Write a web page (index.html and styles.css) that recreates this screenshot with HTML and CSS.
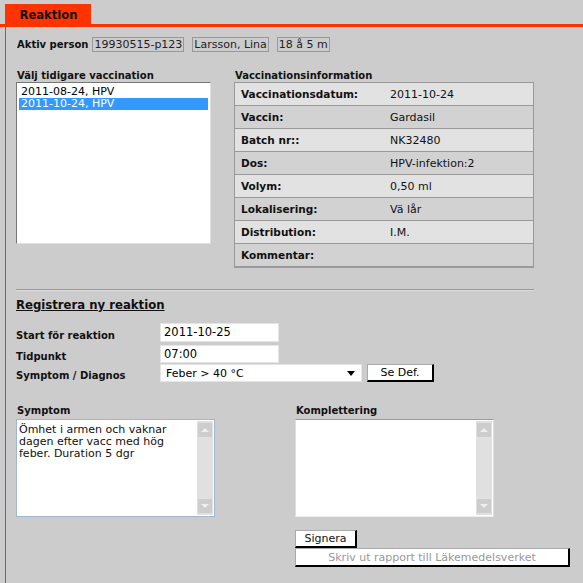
FILE: index.html
```html
<!DOCTYPE html>
<html>
<head>
<meta charset="utf-8">
<link rel="stylesheet" href="styles.css">
</head>
<body>
<div class="header">
  <div class="tab">Reaktion</div>
</div>
<div class="content">
  <div class="person">
    <span class="plabel">Aktiv person</span>
    <span class="pbox">19930515-p123</span>
    <span class="pbox">Larsson, Lina</span>
    <span class="pbox">18 å 5 m</span>
  </div>

  <div class="top">
    <div class="leftcol">
      <div class="label">Välj tidigare vaccination</div>
      <div class="listbox">
        <div class="item">2011-08-24, HPV</div>
        <div class="item sel">2011-10-24, HPV</div>
      </div>
    </div>
    <div class="rightcol">
      <div class="label">Vaccinationsinformation</div>
      <div class="info">
        <div class="row light"><span class="k">Vaccinationsdatum:</span><span class="v">2011-10-24</span></div>
        <div class="row dark"><span class="k">Vaccin:</span><span class="v">Gardasil</span></div>
        <div class="row light"><span class="k">Batch nr::</span><span class="v">NK32480</span></div>
        <div class="row dark"><span class="k">Dos:</span><span class="v">HPV-infektion:2</span></div>
        <div class="row light"><span class="k">Volym:</span><span class="v">0,50 ml</span></div>
        <div class="row dark"><span class="k">Lokalisering:</span><span class="v">Vä lår</span></div>
        <div class="row light"><span class="k">Distribution:</span><span class="v">I.M.</span></div>
        <div class="row dark last"><span class="k">Kommentar:</span><span class="v"></span></div>
      </div>
    </div>
  </div>

  <div class="divider"></div>

  <div class="heading">Registrera ny reaktion</div>

  <div class="form">
    <div class="frow r1"><span class="flabel">Start för reaktion</span><span class="input">2011-10-25</span></div>
    <div class="frow r2"><span class="flabel">Tidpunkt</span><span class="input">07:00</span></div>
    <div class="frow r3"><span class="flabel">Symptom / Diagnos</span>
      <span class="select"><span>Feber &gt; 40 °C</span><span class="caret"></span></span>
      <span class="btn sedef">Se Def.</span>
    </div>
  </div>

  <div class="areas">
    <div class="acol">
      <div class="label">Symptom</div>
      <div class="textarea blue">
        <div class="ttext">Ömhet i armen och vaknar<br>dagen efter vacc med hög<br>feber. Duration 5 dgr</div>
        <div class="sbar"><span class="sbtn up"></span><span class="sbtn down"></span></div>
      </div>
    </div>
    <div class="acol">
      <div class="label">Komplettering</div>
      <div class="textarea grey">
        <div class="ttext"></div>
        <div class="sbar"><span class="sbtn up"></span><span class="sbtn down"></span></div>
      </div>
      <div class="buttons">
        <span class="btn signera">Signera</span>
        <span class="btn skriv">Skriv ut rapport till Läkemedelsverket</span>
      </div>
    </div>
  </div>
</div>
</body>
</html>
```
FILE: styles.css
```css
html, body {
  margin: 0;
  padding: 0;
  background: #cccccc;
  height: 100%;
}
body {
  font-family: "DejaVu Sans", Verdana, sans-serif;
  font-size: 11px;
  color: #000;
  overflow: hidden;
}
.header {
  padding: 4px 0 0 5px;
  border-bottom: 3px solid #ff3300;
}
.tab {
  width: 86px;
  height: 20px;
  background: #ff3300;
  font-weight: bold;
  font-size: 11.6px;
  line-height: 22px;
  text-align: center;
  color: #111;
  box-sizing: border-box;
  padding-left: 1px;
}
.content {
  margin-left: 5px;
  border-left: 1px solid #ff3300;
  padding-left: 10px;
  height: 560px;
  box-sizing: border-box;
}
.person {
  display: flex;
  align-items: center;
  padding-top: 10px;
  height: 15px;
}
.plabel {
  font-weight: bold;
  font-size: 10px;
  margin-left: 1px;
  margin-right: 4px;
  color: #111;
}
.pbox {
  border: 1px solid #999;
  height: 13px;
  line-height: 13px;
  padding: 0 1px;
  margin-right: 8px;
  color: #222;
}
.top {
  display: flex;
  margin-top: 17px;
}
.label {
  font-weight: bold;
  font-size: 10px;
  height: 13px;
  line-height: 14px;
  margin-left: 1px;
  color: #111;
}
.leftcol {
  width: 195px;
  margin-right: 23px;
}
.listbox {
  height: 162px;
  background: #fff;
  border-top: 1px solid #777;
  border-left: 1px solid #777;
  border-right: 1px solid #e0e0e0;
  border-bottom: 1px solid #e0e0e0;
  box-sizing: border-box;
  padding: 3px 2px;
}
.item {
  height: 12px;
  line-height: 12px;
  padding-left: 2px;
}
.item.sel {
  background: #3399ff;
  color: #fff;
}
.rightcol {
  width: 300px;
}
.info {
  border: 1px solid #999;
  border-bottom: 2px solid #999;
}
.row {
  display: flex;
  align-items: center;
  height: 22px;
  border-bottom: 1px solid #999;
  padding-left: 6px;
}
.row.last {
  border-bottom: none;
}
.row.light { background: #e2e2e2; }
.row.dark { background: #d2d2d2; }
.k {
  font-weight: bold;
  font-size: 10.5px;
  width: 149px;
  color: #111;
}
.v { color: #111; }
.divider {
  margin-top: 21px;
  width: 518px;
  border-top: 1px solid #9a9a9a;
  border-bottom: 1px solid #dcdcdc;
}
.heading {
  margin-top: 6px;
  font-size: 11.7px;
  font-weight: bold;
  text-decoration: underline;
  height: 16px;
  line-height: 16px;
  color: #111;
}
.form {
  margin-top: 9px;
}
.frow {
  display: flex;
  align-items: flex-end;
}
.r1 { height: 20px; }
.r2 { height: 19px; margin-top: 2px; }
.r3 { height: 19px; margin-top: 1px; align-items: flex-start; }
.flabel {
  font-weight: bold;
  font-size: 10px;
  width: 144px;
  padding-bottom: 1px;
  color: #111;
}
.r3 .flabel { padding-top: 6px; }
.input {
  width: 119px;
  height: 19px;
  box-sizing: border-box;
  background: #fff;
  border: 1px solid #e4e4e4;
  padding-left: 3px;
  line-height: 17px;
  font-size: 11.5px;
}
.r2 .input { height: 18px; line-height: 16px; }
.select {
  width: 202px;
  height: 18px;
  box-sizing: border-box;
  background: #fff;
  border: 1px solid #e4e4e4;
  display: flex;
  align-items: center;
  justify-content: space-between;
  padding: 0 6px 0 5px;
  margin-right: 5px;
}
.caret {
  width: 0;
  height: 0;
  border-left: 4px solid transparent;
  border-right: 4px solid transparent;
  border-top: 5px solid #000;
}
.btn {
  display: inline-flex;
  align-items: center;
  justify-content: center;
  background: #fff;
  box-sizing: border-box;
  border-top: 1px solid #aaa;
  border-left: 1px solid #aaa;
  border-right: 2px solid #000;
  border-bottom: 2px solid #000;
}
.sedef {
  width: 67px;
  height: 18px;
}
.areas {
  display: flex;
  margin-top: 21px;
}
.acol {
  width: 199px;
  margin-right: 80px;
}
.textarea {
  height: 98px;
  box-sizing: border-box;
  background: #fff;
  display: flex;
  margin-top: 2px;
}
.textarea.blue {
  border: 1px solid #9fb8d0;
}
.textarea.grey {
  border-top: 1px solid #999;
  border-left: 1px solid #ddd;
  border-right: 1px solid #ddd;
  border-bottom: 1px solid #eee;
}
.ttext {
  flex: 1;
  padding: 4px 2px;
  line-height: 12px;
  color: #111;
}
.sbar {
  width: 16px;
  background: #e0e0e0;
  display: flex;
  flex-direction: column;
  justify-content: space-between;
  align-items: center;
  padding: 2px 0;
  margin: 1px 1px 1px 0;
}
.sbtn {
  width: 14px;
  height: 14px;
  background: #cdcdcd;
  position: relative;
}
.sbtn::after {
  content: "";
  position: absolute;
  left: 3px;
  width: 0;
  height: 0;
  border-left: 4px solid transparent;
  border-right: 4px solid transparent;
}
.sbtn.up::after {
  top: 5px;
  border-bottom: 4px solid #eee;
}
.sbtn.down::after {
  top: 5px;
  border-top: 4px solid #eee;
}
.buttons {
  margin-top: 13px;
  display: flex;
  flex-direction: column;
}
.signera {
  width: 62px;
  height: 18px;
  color: #111;
}
.skriv {
  width: 275px;
  height: 19px;
  color: #999;
}
```
